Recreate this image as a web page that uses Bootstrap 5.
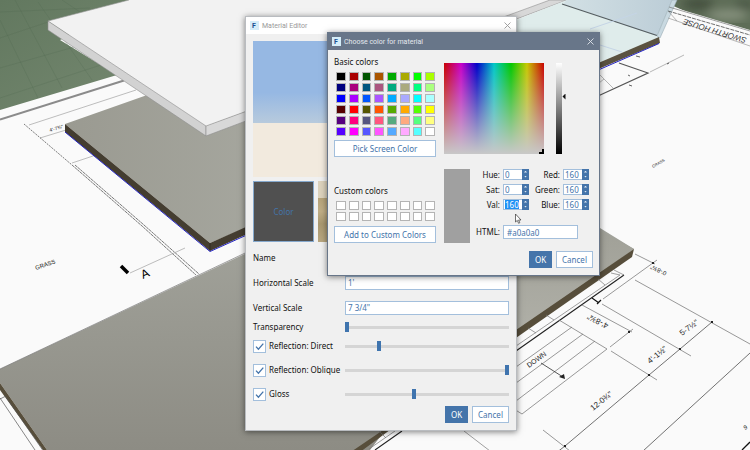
<!DOCTYPE html>
<html lang="en">
<head>
<meta charset="utf-8">
<meta name="viewport" content="width=device-width, initial-scale=1">
<title>Material Editor</title>
<link href="https://cdn.jsdelivr.net/npm/bootstrap@5.3.0/dist/css/bootstrap.min.css" rel="stylesheet">
<style>
:root{--ui-blue:#4474aa;--ui-line:#a3bfdc;--ui-face:#f0f0f0}
body{font-family:"Noto Sans","Open Sans",sans-serif;font-size:8px;line-height:10px;color:#111;background:#fafafa}
.scene{font-family:"Liberation Sans",Arial,sans-serif}
.win{background:var(--ui-face);box-shadow:0 1px 6px rgba(0,0,0,.5);border:1px solid #b9bcc0}
.win-editor{left:245px;top:16px;width:272px}
.win-color{left:327px;top:32px;width:273px;border-color:#687689}
.win-bar{height:17px;padding:0 4px;gap:3px;font-size:7px;font-family:Roboto,"Open Sans",sans-serif}
.win-editor .win-bar{background:#fff;color:#999}
.win-color .win-bar{background:#687689;color:#e4e8ee}
.x-btn{width:10px;height:10px}
.win-editor .x-btn{color:#999}
.win-color .x-btn{color:#e0e4ea}
.ed-body{padding:7px}
.ed-form{margin-top:3px}
.co-body{padding:7px 6px}
.sky{height:136px;margin-bottom:4px;background:linear-gradient(#96b8e3 0 38%,#b7cadd 60%,#f2eade 60% 100%)}
.tile{width:61px;height:61px;border:1px solid #86a9cd;color:var(--ui-blue);background:#505050;font-size:8px}
.tile-wood{border:0;background:linear-gradient(#dcd2bc 0 28%,#b6a379 28%,#c0ae86 50%,#a99870 70%,#b9a780)}
.form-line{height:25px}
.line-low{height:14px}
.line-mid{height:24px}
.lab{width:92px}
.field{border:1px solid var(--ui-line);border-radius:0;color:var(--ui-blue);background:#fff;padding:0 2px;min-width:0;height:14px;font-size:8px;line-height:10px;outline:0}
.field::selection{background:#1e90f5;color:#fff}
.tick{appearance:none;width:13px;height:13px;margin:0 3px 0 0;border:1px solid var(--ui-line);background:#fff}
.tick:checked{background:#fff url("data:image/svg+xml,%3Csvg xmlns='http://www.w3.org/2000/svg' viewBox='0 0 11 11'%3E%3Cpath d='M2 5.6 4.4 8.2 9.3 2.6' fill='none' stroke='%234474aa' stroke-width='1.3'/%3E%3C/svg%3E") center/11px no-repeat}
.slide{appearance:none;background:linear-gradient(#d5d5d5,#d5d5d5) center/100% 3px no-repeat;height:10px;min-width:0;margin:0}
.slide::-webkit-slider-thumb{appearance:none;width:4px;height:10px;background:#3f74ae}
.cmd{height:17px;border:1px solid var(--ui-line);background:#fff;color:var(--ui-blue);border-radius:0;padding:0;font-size:8px;line-height:10px}
.cmd-ok{width:23px;background:var(--ui-blue);border-color:var(--ui-blue);color:#fff}
.cmd-no{width:37px}
.co-left{width:102px}
.swatches{display:grid;grid-template-columns:repeat(8,1fr);gap:2px 3px;padding:0 1px 0 2px}
.swatches button{height:9px;padding:0;border:1px solid #b4b4b4}
.basic{margin:5px 0 4px}
.custom{margin:5px 0}
.custom-title{margin-top:29px}
.co-right{padding-top:6px;gap:15px}
.spectrum{width:100px;height:91px;background:linear-gradient(rgba(200,200,200,0),#c8c8c8),linear-gradient(to right,#c80000,#c800c8 17%,#0000c8 33%,#00c8c8 50%,#00c800 67%,#c8c800 83%,#c80000)}
.spectrum::after{content:"";right:0;bottom:0;width:5px;height:5px;position:absolute;border:solid #000;border-width:0 2px 2px 0}
.val-wrap{width:6px;height:91px;background:linear-gradient(#fff,#000)}
.val-slide{appearance:none;writing-mode:vertical-lr;direction:rtl;left:3px;top:0;width:10px;height:91px;margin:0;background:none}
.val-slide::-webkit-slider-thumb{appearance:none;width:5px;height:6px;background:#111;clip-path:polygon(20% 50%,80% 0,80% 100%)}
.now{width:26px;height:74px;background:#a0a0a0}
.values{display:grid;grid-template-columns:30px 26px 28px 26px;gap:4px 3px;align-items:center;align-content:start;text-align:right}
.values .field{height:11px;line-height:9px;border-right:0;padding:0 1px}
.spin{width:7px;background:var(--ui-blue)}
.spin button{height:5px;padding:0;border:0;background:none}
.spin button::before{content:"";display:block;width:3px;height:2px;margin:1px auto;background:#dbe6f2;clip-path:polygon(50% 0,100% 100%,0 100%)}
.spin button+button::before{clip-path:polygon(0 0,100% 0,50% 100%)}
.values .html-field{grid-column:2/5;width:75px;height:14px;border-right:1px solid var(--ui-line);padding:0 3px}
.html-lab,.html-field{margin-top:11px}
.co-foot{margin-top:8px}
.pointer-mark{left:514px;top:213px;width:8px;height:12px}
</style>
<script src="https://cdn.jsdelivr.net/npm/bootstrap@5.3.0/dist/js/bootstrap.bundle.min.js"></script>
</head>
<body class="vh-100 overflow-hidden position-relative">
<svg class="scene d-block w-100 h-100" viewBox="0 0 750 450" preserveAspectRatio="xMidYMid slice" aria-hidden="true">
  <defs>
    <linearGradient id="gr" x1="0" y1="0" x2="1" y2="1"><stop offset="0" stop-color="#62785f"/><stop offset="1" stop-color="#758870"/></linearGradient>
    <linearGradient id="slab" x1="0" y1="0" x2="0" y2="1"><stop offset="0" stop-color="#a2a39b"/><stop offset="1" stop-color="#8d8c84"/></linearGradient>
    <linearGradient id="mid" x1="0" y1="0" x2="1" y2="0"><stop offset="0" stop-color="#9a9a91"/><stop offset="1" stop-color="#a8a9a1"/></linearGradient>
    <linearGradient id="right" x1="0" y1="0" x2="0" y2="1"><stop offset="0" stop-color="#9e9e95"/><stop offset="1" stop-color="#b1b1a9"/></linearGradient>
    <linearGradient id="glass" x1="0" y1="0" x2="1" y2="0"><stop offset="0" stop-color="#d2e0e4"/><stop offset="1" stop-color="#bccdd7"/></linearGradient>
    <filter id="soft"><feGaussianBlur stdDeviation="5"/></filter>
    <clipPath id="lawn"><path d="M672 0H750V30L669 6Z"/></clipPath>
  </defs>
  <path d="M0 0H140L60 40L117 75L0 110Z" fill="url(#gr)"/>
  <path d="M0 12 90 8M0 38 60 18M0 68 92 42M0 98 110 62M15 0 62 88M62 0 80 12M0 20 38 98M38 2 92 80" stroke="#50684f" stroke-opacity=".25" fill="none"/>
  <g clip-path="url(#lawn)"><path d="M660 0H750V40Z" fill="#5e6d57"/><g filter="url(#soft)"><ellipse cx="698" cy="4" rx="16" ry="5" fill="#3f4b3b"/><ellipse cx="728" cy="15" rx="20" ry="5" fill="#8a9481"/><ellipse cx="745" cy="5" rx="10" ry="5" fill="#495644"/></g></g>
  <path d="M0 119.500 124 80.500" stroke="#8b8b8b" stroke-width="2"/>
  <g fill="none" stroke="#a2a2a2" stroke-width=".7">
    <path d="M29 125 136 90M40 138 66 130M72 163 96 155"/>
    <path d="M24 124 72 165" stroke="#444" stroke-dasharray="2 1"/>
    <path d="M72 165 142 226 196 275M75 165 144 225 199 274" stroke="#444" stroke-dasharray="3 .5"/>
    <path d="M130 273 185 248"/>
  </g>
  <path d="M65 124 150 94 206 126 300 90V205L210 243Z" fill="url(#mid)"/>
  <path d="M65 124 210 243 300 203V210L210 251 65 132Z" fill="#443d30"/>
  <path d="M210 243V251" stroke="#282418" stroke-width=".7"/>
  <path d="M65 132 210 251.500 300 211" fill="none" stroke="#2626c4" stroke-width="1"/>
  <path d="M48 21 129 0H550L206 126Z" fill="#f2f2f2"/>
  <path d="M48 21 206 126V136L48 30Z" fill="#d2d2d2" stroke="#8d8d8d" stroke-width=".6"/>
  <path d="M206 126 550 0H567L206 136Z" fill="#d8d8d8" stroke="#8d8d8d" stroke-width=".6"/>
  <path d="M48 21 129 0" stroke="#999" stroke-width=".6"/>
  <path d="M567 0H676L659 37 600 68 516 90V20Z" fill="#dfeceb"/>
  <path d="M567 0H672L657 36 563 4Z" fill="url(#glass)"/>
  <path d="M562 4 657 35.500" stroke="#555d60" stroke-width="1.300"/>
  <path d="M590 29 637 13M600 45 622 52" stroke="#c5d5e6"/>
  <path d="M672 0 657 36 660 38 677 0Z" fill="#c9d9e1" stroke="#9bacb5" stroke-width=".6"/>
  <path d="M596 64 659 37 660 43 596 70Z" fill="#5a5240"/>
  <path d="M596 71 659 43.500" stroke="#2626c4"/>
  <g fill="none" stroke="#999" stroke-width=".7">
    <path d="M619 63 648 73 598 96" stroke="#555" stroke-width="1.200"/>
    <path d="M650 72 684 55M600 75 613 88M599 83 604 79"/>
    <path d="M669 7 750 31" stroke="#777"/>
    <path d="M668 11 750 35" stroke="#333" stroke-dasharray="4 1"/>
    <path d="M668 18 750 46M669 12 677 21"/>
    <path d="M636 56l4 1M628 75l2 1M629 85l3 1M667 64l2-1" stroke="#222"/>
  </g>
  <text transform="translate(747 38) rotate(197)" font-size="8" font-style="italic" fill="#333">SWORTH HOUSE</text>
  <path d="M0 369 300 228H600L634 249 390 424 370 450H47L0 383Z" fill="url(#slab)"/>
  <path d="M560 214 600 230.500 634 249 500 342 V260Z" fill="url(#right)"/>
  <path d="M0 369 260 246" stroke="#777" stroke-width=".7"/>
  <path d="M634 249 632 257 500 349V341ZM392 424 342 458H352L398 424ZM0 383 47 450H43L0 390Z" fill="#574e3b"/>
  <g fill="none" stroke="#777" stroke-width=".7">
    <path d="M0 398 35 450M6 397 44 452M0 399 6 396" stroke="#555"/>
    <path d="M624 275 516 351M402 431 375 450" stroke="#222" stroke-width="1.100"/>
    <path d="M614 270 624 275M611 273 620 275 516 346M598 279 605 285M546 315 554 320M528 328 536 333"/>
    <path d="M395 431 369 449M378 430 386 438M464 431 490 451"/>
  </g>
  <g fill="none" stroke="#777" stroke-width=".75">
    <path d="M559 320 607 349 522 414 514 409M572 327 516 367M583 334 516 383M595 341 516 401"/>
    <path d="M582 305 632 332M610 347 633 329M635 254 655 264M603 299 657 260M635 280 750 344M602 304 691 356M611 351 657 380M543 430 570 451"/>
    <path d="M712 322 680 349 649 375 565 446 556 453M750 353 643 451" stroke="#444"/>
    <path d="M541 363 563 377" stroke="#222"/>
    <path d="M592 298 599 303M597 304 601 300" stroke="#111" stroke-width="1.200"/>
    <path d="M742 450 750 442" stroke="#111" stroke-width="1.300"/>
  </g>
  <path d="M565 379 559 377 564 374ZM711 321h2v2h-2zM679 348h2v2h-2zM648 374h2v2h-2zM564 445h2v2h-2zM628 331h2v2h-2zM652 262h2v2h-2z" fill="#222"/>
  <g fill="#222" font-size="8">
    <text transform="translate(529 368) rotate(-36)" font-size="7">DOWN</text>
    <text transform="translate(593 411) rotate(-39)">12-0¾"</text>
    <text transform="translate(650 364) rotate(-39)">4'-1½"</text>
    <text transform="translate(682 336) rotate(-36)">5-7½"</text>
    <text transform="translate(609 324) rotate(207)">4'-8¾"</text>
    <text transform="translate(667 272) rotate(205)" font-size="6">0'-8¾"</text>
    <text transform="translate(653 168) rotate(-30)" font-size="4">GRASS</text>
    <text transform="translate(36 270) rotate(-19)" font-size="6">GRASS</text>
    <text transform="translate(50 132) rotate(-17)" font-size="5">4'-7¾"</text>
    <text transform="translate(143 279) rotate(-24)" font-size="12" fill="#000">A</text>
    <text transform="translate(745 430) rotate(-30)" font-size="6">9</text>
  </g>
  <path d="M121 266 128 273" stroke="#000" stroke-width="3.500"/>
</svg>

<section class="win win-editor position-absolute" aria-label="Material Editor">
  <header class="win-bar d-flex align-items-center">
    <svg width="9" height="9" viewBox="0 0 9 9" aria-hidden="true"><rect width="9" height="9" fill="#d4edf8"/><text x="2" y="7" font-size="7" font-weight="700" fill="#174f91">F</text></svg>
    <span class="flex-grow-1">Material Editor</span>
    <button class="x-btn btn p-0 border-0 d-flex align-items-center justify-content-center" aria-label="Close editor"><svg width="7" height="7" viewBox="0 0 7 7"><path d="M.5.5l6 6m0-6l-6 6" stroke="currentColor" stroke-width=".9"/></svg></button>
  </header>
  <div class="ed-body">
    <div class="sky"></div>
    <div class="d-flex gap-1"><button class="tile p-0">Color</button><button class="tile tile-wood" aria-label="Texture"></button></div>
    <form class="ed-form">
      <div class="form-line d-flex align-items-center"><label class="lab" for="name">Name</label><input class="field flex-fill" id="name"></div>
      <div class="form-line d-flex align-items-center"><label class="lab" for="hs">Horizontal Scale</label><input class="field flex-fill" id="hs" value="1'"></div>
      <div class="form-line d-flex align-items-center"><label class="lab" for="vs">Vertical Scale</label><input class="field flex-fill" id="vs" value='7 3/4"'></div>
      <div class="line-low d-flex align-items-center"><label class="lab" for="tr">Transparency</label><input class="slide flex-fill" type="range" id="tr" value="0"></div>
      <div class="line-mid d-flex align-items-center"><label class="lab d-flex align-items-center"><input class="tick" type="checkbox" checked>Reflection: Direct</label><input class="slide flex-fill" type="range" value="20" aria-label="Direct reflection"></div>
      <div class="line-mid d-flex align-items-center"><label class="lab d-flex align-items-center text-nowrap"><input class="tick" type="checkbox" checked>Reflection: Oblique</label><input class="slide flex-fill" type="range" value="100" aria-label="Oblique reflection"></div>
      <div class="line-mid d-flex align-items-center"><label class="lab d-flex align-items-center"><input class="tick" type="checkbox" checked>Gloss</label><input class="slide flex-fill" type="range" value="42" aria-label="Gloss amount"></div>
      <div class="d-flex justify-content-end gap-1"><button type="button" class="cmd cmd-ok">OK</button><button type="button" class="cmd cmd-no">Cancel</button></div>
    </form>
  </div>
</section>

<section class="win win-color position-absolute" aria-label="Choose color for material">
  <header class="win-bar d-flex align-items-center">
    <svg width="9" height="9" viewBox="0 0 9 9" aria-hidden="true"><rect width="9" height="9" fill="#d4edf8"/><text x="2" y="7" font-size="7" font-weight="700" fill="#174f91">F</text></svg>
    <span class="flex-grow-1">Choose color for material</span>
    <button class="x-btn btn p-0 border-0 d-flex align-items-center justify-content-center" aria-label="Close color dialog"><svg width="7" height="7" viewBox="0 0 7 7"><path d="M.5.5l6 6m0-6l-6 6" stroke="currentColor" stroke-width=".9"/></svg></button>
  </header>
  <div class="co-body">
    <div class="d-flex gap-2">
      <div class="co-left d-flex flex-column flex-shrink-0">
        <div>Basic colors</div>
        <div class="swatches basic" id="basic"></div>
        <button class="cmd">Pick Screen Color</button>
        <div class="custom-title">Custom colors</div>
        <div class="swatches custom" id="custom"></div>
        <button class="cmd">Add to Custom Colors</button>
      </div>
      <div class="co-right d-flex flex-column">
        <div class="d-flex">
          <div class="spectrum position-relative me-2"></div>
          <div class="val-wrap position-relative ms-1"><input class="val-slide position-absolute" type="range" value="64" aria-label="Value"></div>
        </div>
        <div class="d-flex">
          <div class="now"></div>
          <div class="values">
            <label for="hue">Hue:</label><div class="d-flex"><input class="field flex-fill w-100" id="hue" value="0"><div class="spin d-flex flex-column flex-shrink-0"><button aria-label="Hue up"></button><button aria-label="Hue down"></button></div></div>
            <label for="red">Red:</label><div class="d-flex"><input class="field flex-fill w-100" id="red" value="160"><div class="spin d-flex flex-column flex-shrink-0"><button aria-label="Red up"></button><button aria-label="Red down"></button></div></div>
            <label for="sat">Sat:</label><div class="d-flex"><input class="field flex-fill w-100" id="sat" value="0"><div class="spin d-flex flex-column flex-shrink-0"><button aria-label="Sat up"></button><button aria-label="Sat down"></button></div></div>
            <label for="green">Green:</label><div class="d-flex"><input class="field flex-fill w-100" id="green" value="160"><div class="spin d-flex flex-column flex-shrink-0"><button aria-label="Green up"></button><button aria-label="Green down"></button></div></div>
            <label for="val">Val:</label><div class="d-flex"><input class="field flex-fill w-100" id="val" value="160" autofocus><div class="spin d-flex flex-column flex-shrink-0"><button aria-label="Val up"></button><button aria-label="Val down"></button></div></div>
            <label for="blue">Blue:</label><div class="d-flex"><input class="field flex-fill w-100" id="blue" value="160"><div class="spin d-flex flex-column flex-shrink-0"><button aria-label="Blue up"></button><button aria-label="Blue down"></button></div></div>
            <label class="html-lab" for="html">HTML:</label><input class="field html-field" id="html" value="#a0a0a0">
          </div>
        </div>
      </div>
    </div>
    <div class="co-foot d-flex justify-content-end gap-1"><button class="cmd cmd-ok">OK</button><button class="cmd cmd-no">Cancel</button></div>
  </div>
</section>
<svg class="pointer-mark position-absolute" viewBox="0 0 8 12" aria-hidden="true"><path d="M1.500 1V9L3.300 7.400 4.600 10.300 5.800 9.700 4.600 7H7Z" fill="#fff" stroke="#333" stroke-width=".7"/></svg>
<script>
// Basic palette, row by row
const basic = ["000","a00","050","a50","0a0","aa0","0f0","af0",
  "00007f","aa007f","00557f","aa557f","00aa7f","aaaa7f","00ff7f","aaff7f",
  "00f","a0f","05f","a5f","0af","aaf","0ff","aff",
  "500","f00","550","f50","5a0","fa0","5f0","ff0",
  "55007f","ff007f","55557f","ff557f","55aa7f","ffaa7f","55ff7f","ffff7f",
  "50f","f0f","55f","f5f","5af","faf","5ff","fff"];
function fill(id, colors){
  const box = document.getElementById(id);
  for (const c of colors){
    const b = document.createElement("button");
    b.style.backgroundColor = "#" + c;
    b.setAttribute("aria-label", "#" + c);
    box.append(b);
  }
}
fill("basic", basic);
fill("custom", Array(16).fill("fff"));
document.getElementById("val").select();
</script>
</body>
</html>
